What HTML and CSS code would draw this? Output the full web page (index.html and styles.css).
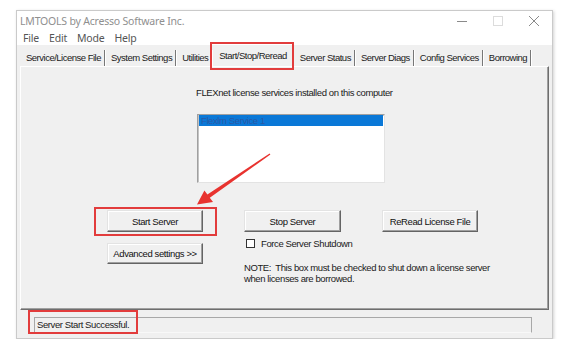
FILE: index.html
```html
<!DOCTYPE html>
<html lang="en">
<head>
  <meta charset="UTF-8">
  <title>LMTOOLS by Acresso Software Inc.</title>
  <link rel="stylesheet" href="styles.css">
</head>
<body>

  <div class="window">
    <div class="titlebar">
      <span class="title">LMTOOLS by Acresso Software Inc.</span>
      <div class="win-controls">
        <span class="ctl">
          <svg width="10" height="10" viewBox="0 0 10 10"><path d="M0 5.5h10" stroke="#8a8a8a" stroke-width="1"/></svg>
        </span>
        <span class="ctl">
          <svg width="10" height="10" viewBox="0 0 10 10"><rect x="0.5" y="0.5" width="9" height="9" fill="none" stroke="#dcdcdc"/></svg>
        </span>
        <span class="ctl">
          <svg width="10" height="10" viewBox="0 0 10 10"><path d="M0 0L10 10M10 0L0 10" stroke="#8a8a8a" stroke-width="1"/></svg>
        </span>
      </div>
    </div>

    <div class="menubar">
      <span>File</span>
      <span>Edit</span>
      <span>Mode</span>
      <span>Help</span>
    </div>

    <!-- Abas -->
    <div class="tabs">
      <div class="tab">Service/License File</div>
      <div class="tab">System Settings</div>
      <div class="tab">Utilities</div>
      <div class="tab active">Start/Stop/Reread</div>
      <div class="tab">Server Status</div>
      <div class="tab">Server Diags</div>
      <div class="tab">Config Services</div>
      <div class="tab">Borrowing</div>
    </div>

    <div class="panel">
      <div class="services">
        <p class="caption">FLEXnet license services installed on this computer</p>
        <div class="listbox">
          <div class="item selected">Flexlm Service 1</div>
        </div>
      </div>

      <div class="actions">
        <div class="marked"><button class="btn">Start Server</button></div>
        <button class="btn">Stop Server</button>
        <button class="btn">ReRead License File</button>
        <button class="btn advanced">Advanced settings &gt;&gt;</button>
        <div class="force">
          <label class="check"><span class="box"></span>Force Server Shutdown</label>
          <p class="note">NOTE:&nbsp; This box must be checked to shut down a license server<br>when licenses are borrowed.</p>
        </div>
      </div>
    </div>

    <div class="statusbar">
      <div class="status">Server Start Successful.</div>
    </div>
  </div>

  <svg class="arrow" width="584" height="358" viewBox="0 0 584 358">
    <polygon fill="#e8332f" points="270.4,154.4 209.8,197.8 213,202 197,204.5 204.4,190.4 207.4,194.4 269.6,153.6"/>
  </svg>

</body>
</html>
```

FILE: styles.css
```css
body {
  margin: 0;
  background-color: white;
  font-family: "Liberation Sans", Arial, sans-serif;
  font-size: 9.5px;
  letter-spacing: -0.4px;
  color: #1a1a1a;
}

.window {
  box-sizing: border-box;
  width: 537px;
  height: 329px;
  margin: 10px 0 0 16px;
  border: 1px solid #cacaca;
  background-color: #f0f0f0;
  box-shadow: 1px 1px 3px rgba(0, 0, 0, 0.18);
  display: flex;
  flex-direction: column;
}

/* Barra de titulo */
.titlebar {
  height: 20px;
  background-color: white;
  display: flex;
  align-items: center;
  padding-left: 3px;
}

.title {
  font-family: "Noto Sans", sans-serif;
  font-size: 10.5px;
  letter-spacing: -0.2px;
  color: #8f8f8f;
}

.win-controls {
  margin-left: auto;
  display: flex;
}

.win-controls .ctl {
  width: 36px;
  height: 20px;
  display: flex;
  align-items: center;
  justify-content: center;
}

.menubar {
  height: 14px;
  background-color: white;
  display: flex;
  align-items: center;
  padding-left: 6px;
  gap: 10px;
  font-family: "Noto Sans", sans-serif;
  font-size: 10.5px;
  letter-spacing: -0.2px;
  color: #555;
}

/* Abas */
.tabs {
  height: 21px;
  display: flex;
  align-items: flex-end;
  padding-left: 3px;
  white-space: nowrap;
  letter-spacing: -0.5px;
}

.tab {
  height: 16px;
  line-height: 15px;
  padding: 0 3px 0 6px;
  border-right: 1px solid #777;
  box-shadow: 1px 0 0 white;
}

.tab.active {
  position: relative;
  padding: 0 7px;
  border-right: none;
  box-shadow: none;
  height: 19px;
  line-height: 17px;
}

.tab.active::after {
  content: "";
  position: absolute;
  left: -2px;
  right: 0;
  top: -5px;
  bottom: -4px;
  border: 2px solid #e23c3c;
}

.panel {
  box-sizing: border-box;
  height: 244px;
  margin: 0 3px;
  border-top: 1px solid white;
  border-left: 1px solid white;
  border-right: 1px solid #6e6e6e;
  border-bottom: 1px solid #6e6e6e;
  box-shadow: inset -1px -1px 0 #a0a0a0;
}

.services {
  padding: 20px 0 0 175px;
}

.caption {
  margin: 0 0 15px 0;
  line-height: 12px;
}

.listbox {
  box-sizing: border-box;
  width: 188px;
  height: 69px;
  margin-left: 1px;
  background-color: white;
  border: 1px solid;
  border-color: #a0a0a0 #e3e3e3 #e3e3e3 #a0a0a0;
  box-shadow: inset 1px 1px 0 #c4c4c4;
  padding: 0 1px;
}

.item {
  height: 11px;
  line-height: 11px;
  padding-left: 2px;
}

.item.selected {
  background-color: #0a78d7;
  color: #2a58a6;
}

/* Botoes */
.actions {
  display: grid;
  grid-template-columns: 96px 97px 96px;
  column-gap: 41px;
  row-gap: 6px;
  margin: 27px 0 0 86px;
}

.marked {
  position: relative;
}

.marked::after {
  content: "";
  position: absolute;
  left: -13px;
  right: -14px;
  top: -3px;
  bottom: -4px;
  border: 2px solid #e23c3c;
}

.btn {
  box-sizing: border-box;
  width: 100%;
  height: 22px;
  font-family: inherit;
  font-size: inherit;
  letter-spacing: inherit;
  color: #111;
  background-color: #f0f0f0;
  border: 1px solid;
  border-color: #e3e3e3 #646464 #646464 #e3e3e3;
  box-shadow: inset -1px -1px 0 #a0a0a0, inset 1px 1px 0 white;
  padding: 0;
}

.advanced {
  margin-top: 5px;
  height: 21px;
}

.force {
  grid-column: 2 / 4;
}

.check {
  display: flex;
  align-items: center;
  height: 11px;
  line-height: 11px;
  padding-left: 2px;
}

.box {
  width: 7px;
  height: 7px;
  border: 1px solid #333;
  background-color: white;
  margin-right: 6px;
}

.note {
  margin: 13px 0 0 0;
  line-height: 11px;
  white-space: nowrap;
}

/* Barra de status */
.statusbar {
  flex: 1;
  padding: 7px 20px 0 17px;
}

.status {
  position: relative;
  height: 14px;
  line-height: 13px;
  padding-left: 2px;
  border: 1px solid;
  border-color: #a8a8a8 #a8a8a8 #f8f8f8 #a8a8a8;
}

.status::after {
  content: "";
  position: absolute;
  left: -7px;
  top: -8px;
  width: 106px;
  height: 20px;
  border: 2px solid #e23c3c;
}

.arrow {
  position: absolute;
  left: 0;
  top: 0;
  pointer-events: none;
}
```
